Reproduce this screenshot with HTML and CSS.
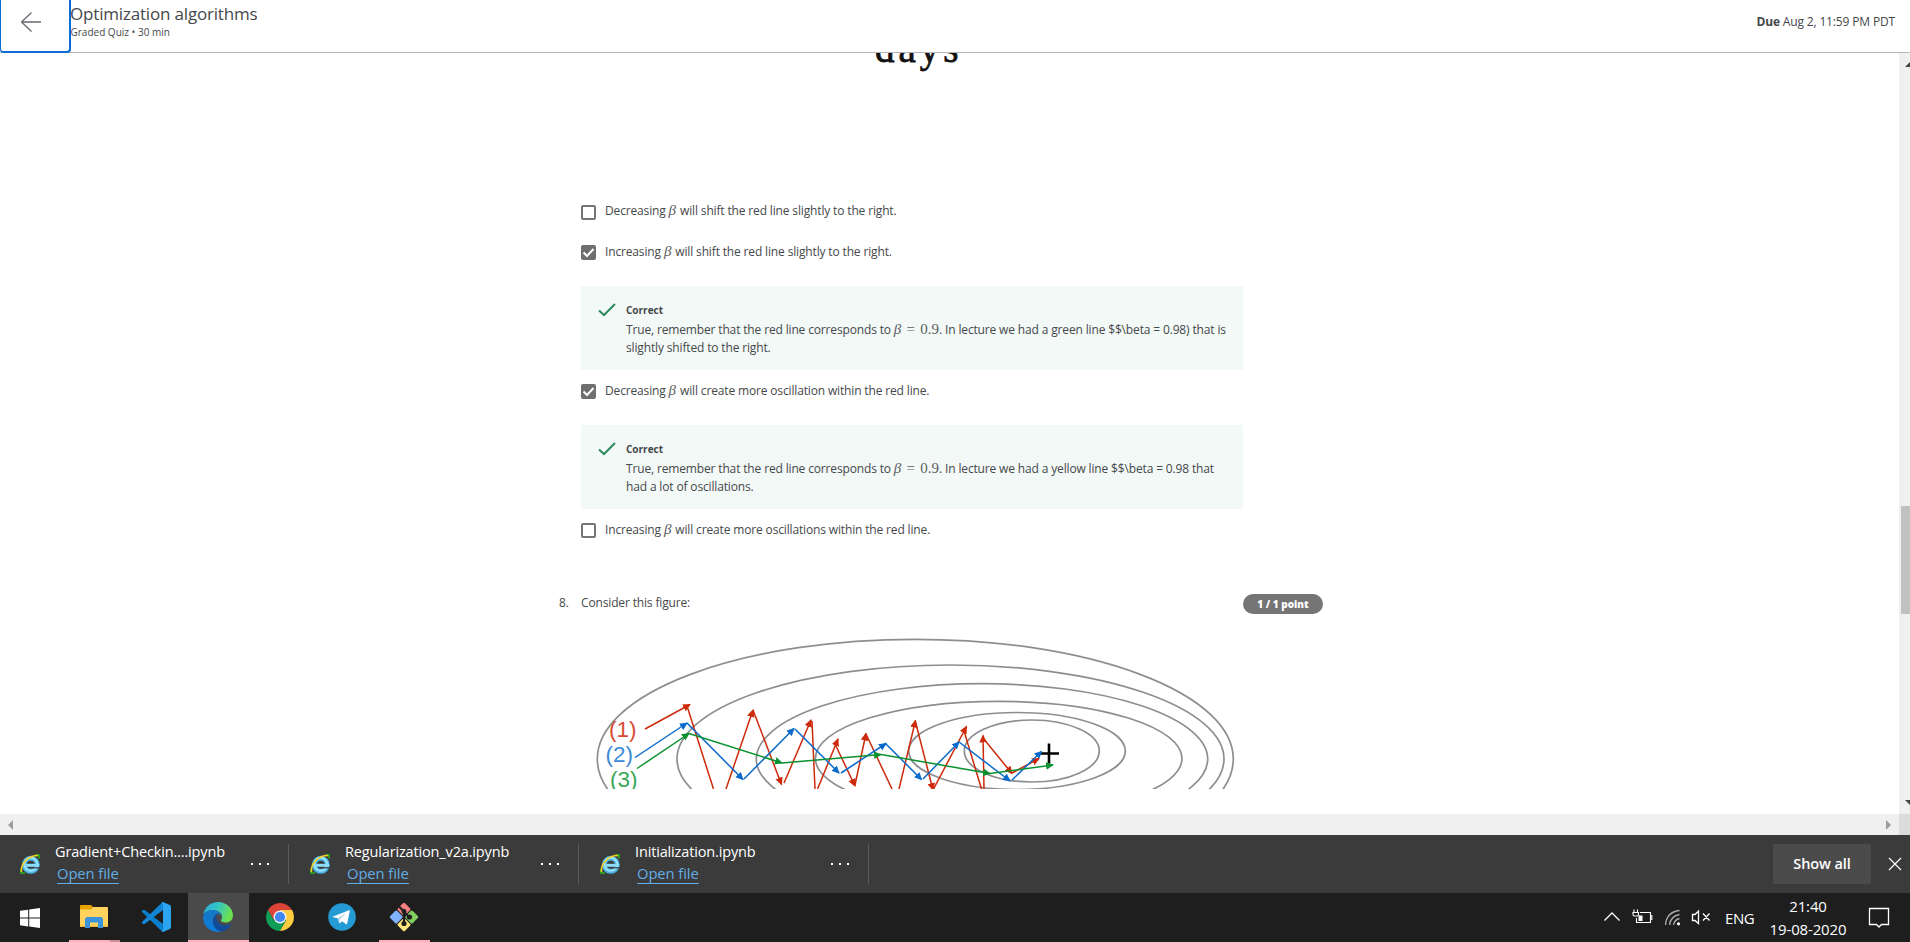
FILE: index.html
```html
<!DOCTYPE html>
<html lang="en">
<head>
<meta charset="utf-8">
<title>Optimization algorithms</title>
<link rel="stylesheet" href="styles.css">
</head>
<body>
<div class="screen">
  <header class="header">
    <button class="back" aria-label="Back">
      <svg width="22" height="22" viewBox="0 0 22 22"><path d="M11.500 1.500 1.500 11l10 9.500M1.500 11H21" /></svg>
    </button>
    <div class="heading">
      <h1 class="title">Optimization algorithms</h1>
      <p class="subtitle">Graded Quiz • 30 min</p>
    </div>
    <div class="due"><b>Due</b> Aug 2, 11:59 PM PDT</div>
  </header>

  <div class="viewport">
    <main class="page">
      <div class="axis"><span class="axis-label">days</span></div>

      <div class="option o1"><span class="box"></span><span class="t">Decreasing <i class="m">β</i> will shift the red line slightly to the right.</span></div>
      <div class="option"><span class="box on"><svg viewBox="0 0 15 15"><path d="M2.500 7.500 6 11l6.500-7"/></svg></span><span class="t">Increasing <i class="m">β</i> will shift the red line slightly to the right.</span></div>
      <section class="feedback">
        <svg class="tick" width="18" height="14" viewBox="0 0 18 14"><path d="M1 7.500 6 12 17 1"/></svg>
        <div>
          <h2 class="verdict">Correct</h2>
          <p class="t">True, remember that the red line corresponds to <span class="m eq"><i>β</i> = 0.9</span>. In lecture we had a green line $$\beta = 0.98) that is<br>slightly shifted to the right.</p>
        </div>
      </section>
      <div class="option o3"><span class="box on"><svg viewBox="0 0 15 15"><path d="M2.500 7.500 6 11l6.500-7"/></svg></span><span class="t">Decreasing <i class="m">β</i> will create more oscillation within the red line.</span></div>
      <section class="feedback">
        <svg class="tick" width="18" height="14" viewBox="0 0 18 14"><path d="M1 7.500 6 12 17 1"/></svg>
        <div>
          <h2 class="verdict">Correct</h2>
          <p class="t">True, remember that the red line corresponds to <span class="m eq"><i>β</i> = 0.9</span>. In lecture we had a yellow line $$\beta = 0.98 that<br>had a lot of oscillations.</p>
        </div>
      </section>
      <div class="option o4"><span class="box"></span><span class="t">Increasing <i class="m">β</i> will create more oscillations within the red line.</span></div>

      <div class="question">
        <span class="t num">8.</span><span class="t ask">Consider this figure:</span><span class="points">1 / 1 point</span>
      </div>
      <svg class="figure" width="662" height="165" viewBox="581 624 662 165">
        <defs>
          <marker id="r" markerUnits="userSpaceOnUse" markerWidth="8" markerHeight="8" refX="7" refY="4" orient="auto"><path d="M0 .2 8 4 0 7.800z" fill="#cd2a0c"/></marker>
          <marker id="b" markerUnits="userSpaceOnUse" markerWidth="8" markerHeight="8" refX="7" refY="4" orient="auto"><path d="M0 .2 8 4 0 7.800z" fill="#0a6acb"/></marker>
          <marker id="g" markerUnits="userSpaceOnUse" markerWidth="8" markerHeight="8" refX="7" refY="4" orient="auto"><path d="M0 .2 8 4 0 7.800z" fill="#0a9130"/></marker>
        </defs>
        <g class="rings">
          <ellipse cx="915.300" cy="759" rx="318" ry="119.700"/>
          <ellipse cx="950.500" cy="759" rx="273.500" ry="94"/>
          <ellipse cx="982" cy="759" rx="225.700" ry="75.300"/>
          <ellipse cx="998.700" cy="758.500" rx="183.300" ry="57.200"/>
          <ellipse cx="1017" cy="751" rx="108.300" ry="38.500"/>
          <ellipse cx="1031.800" cy="751" rx="67.500" ry="31"/>
        </g>
        <path d="M1040 753.500h19M1049 743.500v20" stroke="#000" stroke-width="2.600"/>
        <g class="path-r">
          <path class="head" d="M645 729 690 704.500"/><path d="M687 706 713.500 789"/>
          <path class="head" d="M726 789 753 710"/><path class="head" d="M753 710 781.500 784.500"/>
          <path class="head" d="M784 783 811 720"/><path d="M812 721 815 789"/>
          <path class="head" d="M817.500 789 838 739"/><path class="head" d="M835 744 855 786"/>
          <path class="head" d="M855 785 866 733.500"/><path d="M866 734 892 789"/>
          <path class="head" d="M899 789 915.500 720.500"/><path class="head" d="M915.500 722 933 790"/>
          <path class="head" d="M933 790 966.500 726.500"/><path d="M964 731 981.500 789"/>
          <path class="head" d="M984 789 983 735.500"/><path class="head" d="M983 738 1012 773.500"/>
          <path class="head" d="M1012 773 1039 758.500"/>
        </g>
        <g class="path-b">
          <path class="head" d="M635 757.500 687 723"/><path class="head" d="M687 723 743 779.500"/>
          <path class="head" d="M744 779 794 728.500"/><path class="head" d="M795 729 839 773"/>
          <path class="head" d="M841 773 886 743.500"/><path class="head" d="M885 743 921.500 779.500"/>
          <path class="head" d="M923 779 959 742"/><path class="head" d="M959 742 1010 781"/>
          <path class="head" d="M1012 780 1041.500 751.500"/>
        </g>
        <g class="path-g">
          <path class="head" d="M637 768.500 689 733.500"/><path class="head" d="M689 733.500 782 763"/>
          <path class="head" d="M782 763 881 754.500"/><path class="head" d="M881 754.500 990 773.500"/>
          <path class="head" d="M990 773.500 1053 765"/>
        </g>
        <g class="labels">
          <text x="609" y="736.700" fill="#da4b33">(1)</text>
          <text x="605.500" y="762" fill="#3d8bd6">(2)</text>
          <text x="610" y="787" fill="#3aa757">(3)</text>
        </g>
      </svg>
    </main>
    <div class="vbar"><i class="up"></i><i class="thumb"></i><i class="down"></i></div>
  </div>
  <div class="hbar"><i class="left"></i><i class="right"></i><span class="corner"></span></div>

  <div class="downloads">
    <div class="file">
      <svg class="ie" width="20" height="20"><use href="#ie"/></svg>
      <div class="names"><span class="name">Gradient+Checkin....ipynb</span><a class="open">Open file</a></div>
      <span class="dots"><i></i><i></i><i></i></span>
    </div>
    <div class="file">
      <svg class="ie" width="20" height="20"><use href="#ie"/></svg>
      <div class="names"><span class="name">Regularization_v2a.ipynb</span><a class="open">Open file</a></div>
      <span class="dots"><i></i><i></i><i></i></span>
    </div>
    <div class="file">
      <svg class="ie" width="20" height="20"><use href="#ie"/></svg>
      <div class="names"><span class="name">Initialization.ipynb</span><a class="open">Open file</a></div>
      <span class="dots"><i></i><i></i><i></i></span>
    </div>
    <button class="show">Show all</button>
    <svg class="close" width="14" height="14" viewBox="0 0 14 14"><path d="M1 1 13 13M13 1 1 13"/></svg>
  </div>

  <div class="taskbar">
    <div class="app win"><svg width="20" height="20" viewBox="0 0 20 20"><path fill="#fff" d="M0 2.800 8.200 1.700V9.500H0zM9.200 1.500 20 0V9.500H9.200zM0 10.500H8.200V18.400L0 17.300zM9.200 10.500H20V20L9.200 18.500z"/></svg></div>
    <div class="app explorer"><svg width="28" height="24" viewBox="0 0 28 24"><path fill="#e8a200" d="M0 1Q0 0 1 0H11L13 2 11 5H0z"/><path fill="#ffd35e" d="M0 4.500H11L13 2H27Q28 2 28 3V22H0z"/><path fill="#f5bd3b" d="M0 20.500H28V22H0z"/><path fill="#3a94dd" d="M5 23V14.500Q5 12 7.500 12H20.500Q23 12 23 14.500V23H18V17.500H10V23z"/></svg></div>
    <div class="app"><svg width="30" height="30" viewBox="0 0 30 30"><path fill="#0a80cc" d="M.5 9.500 2 8Q3 7.500 4 8.200L22 22V29.500L20.500 29z"/><path fill="#1286d4" d="M.5 20.500 2 22Q3 22.500 4 21.800L22 8V.5L20.500 1z"/><path fill="#2ba5f0" d="M22 0 28.800 3Q30 3.500 30 5V25Q30 26.500 28.800 27L22 30Q21 30 20.500 29 22 29 22 27V3Q22 1 20.500 1 21 0 22 0z"/></svg></div>
    <div class="app active"><svg width="30" height="30" viewBox="0 0 30 30">
      <defs><linearGradient id="e1" x1="0" y1="0" x2="1" y2=".3"><stop offset="0" stop-color="#2aa6dc"/><stop offset=".5" stop-color="#35c5c6"/><stop offset="1" stop-color="#6be04e"/></linearGradient><linearGradient id="e2" x1="0" y1="0" x2="0" y2="1"><stop offset="0" stop-color="#1478c4"/><stop offset="1" stop-color="#0c7cdc"/></linearGradient></defs>
      <path fill="url(#e1)" d="M.4 12.500C1.500 5 7.500 0 15 0 24 0 30 6.500 30 13.500 30 18 26.500 20.500 22.500 20.500 19.500 20.500 17.800 19.500 17.800 18.600 17.800 18 19 17.200 19 15.200 19 11 14.500 8 9.500 8 5 8 1.800 10.500.4 12.500z"/>
      <path fill="url(#e2)" d="M0 15C.5 10.500 4.500 8 9.500 8 14 8 18 10.500 19 14 17.500 12 15.500 11.500 14 12 11 13 9 16.500 10 21 11 25.500 15 29.500 19 29.400 8 32 0 24.500 0 15z"/>
      <path fill="#114b9b" d="M14 12C8 15 8.500 28.500 19 29.400 23 28.500 26 26.200 28 23 28.300 22.300 27.800 22 27.200 22.300 19 26 11 20 14 12z"/></svg></div>
    <div class="app"><svg width="28" height="28" viewBox="0 0 28 28"><path fill="#db4437" d="M1.900 7A14 14 0 0 1 26.100 7H14L8 17.500z"/><path fill="#0f9d58" d="M1.900 7A14 14 0 0 0 14 28L20 17.500H8z"/><path fill="#ffcd40" d="M26.100 7A14 14 0 0 1 14 28L20 17.500 14 7z"/><circle cx="14" cy="14" r="6.500" fill="#f1f1f1"/><circle cx="14" cy="14" r="5.100" fill="#4285f4"/></svg></div>
    <div class="app telegram"><svg width="28" height="28" viewBox="0 0 28 28"><circle cx="14" cy="14" r="13.800" fill="#259bd5"/><path fill="#fff" d="M5 13.500 21 7.300Q22 7 21.800 8L19.200 20.500Q18.800 21.500 17.800 20.900L14 18.200 11.900 20.200Q11.300 20.700 11.100 19.800L9.700 15.300 5.200 14.200Q4.600 13.900 5 13.500z"/><path fill="#b5cfe4" d="M9.700 15.300 18.500 9.800 11.900 16.300 11.500 20.200z"/></svg></div>
    <div class="app under"><svg width="30" height="30" viewBox="0 0 30 30"><g transform="rotate(45 15 15)"><rect x="4.500" y="4.500" width="10" height="10" rx="1.500" fill="#f67f7f"/><rect x="15.500" y="4.500" width="10" height="10" rx="1.500" fill="#82d05f"/><rect x="15.500" y="15.500" width="10" height="10" rx="1.500" fill="#ffe57c"/><rect x="4.500" y="15.500" width="10" height="10" rx="1.500" fill="#80b3ff"/></g><path d="M10 4.500 15 9.500V22M15 10 20.500 15.500" stroke="#1f1f1f" stroke-width="2.200" fill="none"/><g fill="#1f1f1f"><circle cx="15" cy="9.500" r="2.400"/><circle cx="15" cy="21.500" r="2.600"/><circle cx="20.500" cy="15" r="2.600"/></g></svg></div>

    <div class="tray">
      <svg width="124" height="30" viewBox="0 0 124 30" fill="none" stroke="#fff" stroke-width="1.300">
        <path d="M4.500 19.500 12 12l7.500 7.500"/>
        <path d="M40 11.500H50.500V21.500H36.500V17M51.800 14V19" stroke-width="1.100"/><path d="M38.500 14.500H42.500V20H38.500z" fill="#fff" stroke="none"/><path stroke-width="1.100" d="M34 8.500V11M37.500 8.500V11M33 11.500H38.500V13.500Q38.500 15 37.500 15H34.500Q33 15 33 13.500z"/>
        <g stroke="#aaa"><path d="M65.500 24Q66.500 11 79.500 9.500M69.500 24Q70.500 15 79.500 13.500M73.500 24Q74.500 18.500 79.500 17.500"/></g><circle cx="78.500" cy="22.800" r="1.600" fill="#fff" stroke="none"/>
        <path d="M92.500 13.500H95L98.500 10V22.500L95 19.500H92.500zM103 12.500 109.500 19.500M109.500 12.500 103 19.500"/>
      </svg>
      <span class="lang">ENG</span>
      <div class="clock"><span>21:40</span><span>19-08-2020</span></div>
      <svg class="note" width="22" height="22" viewBox="0 0 22 22"><path d="M1.500 1.500H20.500V17.500H13.500L11 20 8.500 17.500H1.500z" fill="none" stroke="#fff" stroke-width="1.300"/></svg>
    </div>
  </div>
</div>
<svg width="0" height="0" class="sprite"><symbol id="ie" viewBox="0 0 20 20"><circle cx="10.800" cy="10.800" r="6.500" fill="none" stroke="#4db4e6" stroke-width="5"/><circle cx="10.800" cy="10.300" r="6.500" fill="none" stroke="#9be4fb" stroke-width="2"/><path d="M6 11.300H19" stroke="#8bdcf8" stroke-width="3"/><path d="M12 13.800H20" stroke="#3b3b3b" stroke-width="1.200"/><path d="M15 1 19 1V4.500M1 15V19H5" fill="none" stroke="#2ab51c" stroke-width="1.600"/><path d="M1.500 18C.5 10 8 1.500 18 1.500" fill="none" stroke="#f3cf28" stroke-width="1.600"/></symbol></svg>
</body>
</html>
```
FILE: styles.css
```css
* { box-sizing: border-box; }
body { margin: 0; background: #fff; font-family: "Open Sans", sans-serif; color: #45484b; overflow: hidden; }
h1, h2, p { margin: 0; font-weight: 400; }
button { font: inherit; padding: 0; border: 0; background: none; }
.screen { width: 1910px; height: 942px; display: flex; flex-direction: column; overflow: hidden; }

.header { height: 53px; flex: none; display: flex; border-bottom: 1px solid #b5b5b5; }
.back { width: 71px; height: 53px; border: 2px solid #0a6bd6; border-top: 0; border-left-width: 1px; border-radius: 0 0 4px 4px; padding: 11px 0 0 19px; display: flex; background: #fff; flex: none; }
.back svg { fill: none; stroke: #666b70; stroke-width: 1.300; }
.heading { flex: 1; white-space: nowrap; overflow: hidden; }
.title { font-size: 17px; line-height: 24px; height: 25px; padding-top: 2px; letter-spacing: -.18px; text-indent: -1px; }
.subtitle { font-size: 10px; line-height: 14px; text-indent: -.5px; }
.due { font-size: 12px; line-height: 16px; padding: 14px 15px 0 0; white-space: nowrap; letter-spacing: -.15px; }

.viewport { height: 761px; flex: none; display: flex; }
.page { flex: 1; padding-left: 581px; overflow: hidden; }
.axis { height: 151px; overflow: hidden; padding-left: 294px; }
.axis-label { display: block; font: 39px/38px "Liberation Serif", serif; color: #111; -webkit-text-stroke: .8px #111; margin-top: -23px; letter-spacing: 4px; }
.t { font-size: 12px; line-height: 18px; white-space: nowrap; letter-spacing: -.15px; }
.m { font: italic 15px/14px "Liberation Serif", serif; color: #5a5d60; letter-spacing: 0; }
.option .m { margin-right: 1px; }
.eq { font-style: normal; word-spacing: 1.500px; }
.option { display: flex; gap: 9px; height: 41px; }
.o1 .box { margin-top: 1px; }
.o3, .o4 { height: 55px; padding-top: 14px; }
.option .t { margin-top: -2px; }
.box { width: 15px; height: 15px; flex: none; border: 2px solid #757575; border-radius: 2px; background: #fff; display: flex; }
.box.on { border: 0; background: #6f6f6f; }
.box path { fill: none; stroke: #fff; stroke-width: 2; }
.feedback { width: 662px; height: 84px; background: #f3f9f7; display: flex; gap: 10px; padding: 16px 0 0 17px; }
.tick { flex: none; margin-top: 1px; }
.tick path { fill: none; stroke: #2a8c5d; stroke-width: 2; }
.verdict { font-size: 10px; line-height: 14px; font-weight: 700; padding-top: 1px; margin-bottom: 4px; }
.question { display: flex; height: 30px; margin-left: -22px; margin-top: 30px; }
.num { width: 22px; flex: none; }
.ask { width: 662px; flex: none; }
.points { width: 80px; height: 20px; border-radius: 10px; background: #757575; color: #fff; font-size: 10px; font-weight: 800; line-height: 20px; text-align: center; }
.figure { display: block; }
.rings { fill: none; stroke: #8c8e92; stroke-width: 1.700; }
.path-r, .path-b, .path-g { stroke-width: 1.500; fill: none; }
.path-r { stroke: #cd2a0c; } .path-r .head { marker-end: url(#r); }
.path-b { stroke: #0a6acb; } .path-b .head { marker-end: url(#b); }
.path-g { stroke: #0a9130; } .path-g .head { marker-end: url(#g); }
.labels { font: 22.500px "Liberation Sans", sans-serif; }

.vbar { width: 11px; background: #f0f0f0; display: flex; flex-direction: column; overflow: hidden; flex: none; }
.up { margin: 9px 0 0 6px; border: 5px solid transparent; border-top: 0; border-bottom-color: #444; width: 10px; }
.thumb { margin: 439px 0 0 2px; height: 108px; background: #c1c1c1; }
.down { margin: 186px 0 0 6px; border: 5px solid transparent; border-bottom: 0; border-top-color: #444; width: 10px; }
.hbar { height: 21px; flex: none; background: #f0f0f0; display: flex; align-items: center; padding-left: 8px; }
.left { border: 5px solid transparent; border-left: 0; border-right-color: #9e9e9e; }
.right { border: 5px solid transparent; border-right: 0; border-left-color: #9e9e9e; margin-left: auto; margin-right: 8px; }
.corner { width: 11px; height: 21px; background: #dcdcdc; }

.downloads { height: 58px; flex: none; background: #3b3b3b; display: flex; color: #fff; align-items: flex-start; }
.file { width: 290px; height: 40px; margin-top: 9px; border-right: 1px solid #5b5b5b; display: flex; padding-left: 21px; }
.file:first-child { width: 289px; padding-left: 20px; }
.ie { margin-top: 10px; flex: none; }
.names { width: 192px; padding-left: 15px; display: flex; flex-direction: column; align-items: flex-start; white-space: nowrap; }
.name { font-size: 14.500px; line-height: 20px; margin-top: -2px; letter-spacing: -.15px; }
.open { font-size: 14.800px; line-height: 18px; margin: 2px 0 0 2px; color: #63ade5; height: 20px; border-bottom: 1px solid #63ade5; letter-spacing: -.1px; }
.dots { display: flex; gap: 6px; margin: 19px 0 0 19px; }
.dots i { width: 2px; height: 2px; background: #fff; }
.show { width: 98px; height: 40px; margin: 9px 17px 0 auto; background: #4b4b4b; color: #fff; border-radius: 2px; font-size: 14.500px; font-weight: 600; line-height: 38px; letter-spacing: -.1px; }
.close { margin: 22px 8px 0 0; }
.close path { stroke: #fff; stroke-width: 1.200; }

.taskbar { height: 49px; flex: none; background: #1e1e1e; display: flex; }
.app { width: 61px; height: 49px; display: flex; justify-content: center; align-items: center; flex: none; padding-bottom: 1px; }
.win { padding-right: 1px; padding-top: 2px; }
.explorer { width: 51px; margin: 0 5px 0 8px; border-bottom: 2px solid; border-image: linear-gradient(90deg, #ffb1b9 40px, #c98e94 40px) 2; padding: 2px 2px 1px 0; }
.app.active { background: #4a4a4a; border-bottom: 2px solid #ffb1b9; padding: 1px 2px 0 0; margin-left: 2px; }
.telegram { padding-left: 2px; }
.under { width: 51px; margin-left: 8px; border-bottom: 2px solid #ffb1b9; padding: 1px 1px 0 0; }
.tray { margin-left: auto; display: flex; color: #fff; padding-right: 20px; }
.tray > svg:first-child { margin-top: 8px; }
.lang { font-size: 15px; letter-spacing: -.4px; line-height: 22px; margin: 14px 0 0 1px; width: 28px; }
.clock { width: 115px; padding: 2px 5px 0 0; display: flex; flex-direction: column; align-items: center; }
.clock span { line-height: 23px; font-size: 15px; letter-spacing: -.15px; }
.note { margin-top: 14px; }
.sprite { position: absolute; }
```
